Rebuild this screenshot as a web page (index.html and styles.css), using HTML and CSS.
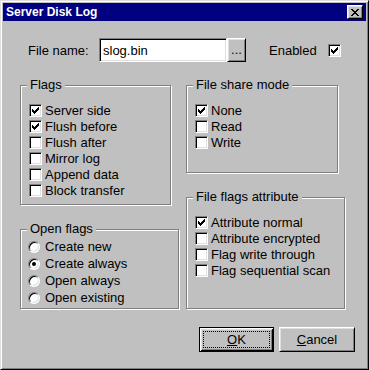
FILE: index.html
```html
<!DOCTYPE html>
<html lang="en">
<head>
  <meta charset="UTF-8" />
  <title>Server Disk Log</title>
  <link rel="stylesheet" href="styles.css">
</head>
<body>

  <div class="window">
    <div class="title-bar">
      <span class="title">Server Disk Log</span>
      <button type="button" class="close-btn">
        <svg width="8" height="7" viewBox="0 0 8 7" shape-rendering="crispEdges">
          <path d="M0 0h2v1H0z M6 0h2v1H6z M1 1h2v1H1z M5 1h2v1H5z M2 2h4v1H2z M3 3h2v1H3z M2 4h4v1H2z M1 5h2v1H1z M5 5h2v1H5z M0 6h2v1H0z M6 6h2v1H6z" fill="#000"/>
        </svg>
      </button>
    </div>

    <div class="file-row">
      <label for="fileName" class="file-label">File name:</label>
      <input type="text" id="fileName" class="text-input" value="slog.bin" />
      <button type="button" class="btn browse-btn">...</button>
      <span class="enabled-label">Enabled</span>
      <span class="check"><svg class="tick" width="7" height="7" viewBox="0 0 7 7" shape-rendering="crispEdges"><path d="M6 0h1v1H6z M5 1h2v1H5z M0 2h1v1H0z M4 2h3v1H4z M0 3h2v1H0z M3 3h3v1H3z M0 4h5v1H0z M1 5h3v1H1z M2 6h1v1H2z"/></svg></span>
    </div>

    <div class="groups">
      <div class="group-col">
        <fieldset class="group group-flags">
          <legend>Flags</legend>
          <div class="option"><span class="check"><svg class="tick" width="7" height="7" viewBox="0 0 7 7" shape-rendering="crispEdges"><path d="M6 0h1v1H6z M5 1h2v1H5z M0 2h1v1H0z M4 2h3v1H4z M0 3h2v1H0z M3 3h3v1H3z M0 4h5v1H0z M1 5h3v1H1z M2 6h1v1H2z"/></svg></span>Server side</div>
          <div class="option"><span class="check"><svg class="tick" width="7" height="7" viewBox="0 0 7 7" shape-rendering="crispEdges"><path d="M6 0h1v1H6z M5 1h2v1H5z M0 2h1v1H0z M4 2h3v1H4z M0 3h2v1H0z M3 3h3v1H3z M0 4h5v1H0z M1 5h3v1H1z M2 6h1v1H2z"/></svg></span>Flush before</div>
          <div class="option"><span class="check"></span>Flush after</div>
          <div class="option"><span class="check"></span>Mirror log</div>
          <div class="option"><span class="check"></span>Append data</div>
          <div class="option"><span class="check"></span>Block transfer</div>
        </fieldset>

        <fieldset class="group group-open">
          <legend>Open flags</legend>
          <div class="option radio-option"><span class="radio"></span>Create new</div>
          <div class="option radio-option"><span class="radio selected"></span>Create always</div>
          <div class="option radio-option"><span class="radio"></span>Open always</div>
          <div class="option radio-option"><span class="radio"></span>Open existing</div>
        </fieldset>
      </div>

      <div class="group-col">
        <fieldset class="group group-share">
          <legend>File share mode</legend>
          <div class="option"><span class="check"><svg class="tick" width="7" height="7" viewBox="0 0 7 7" shape-rendering="crispEdges"><path d="M6 0h1v1H6z M5 1h2v1H5z M0 2h1v1H0z M4 2h3v1H4z M0 3h2v1H0z M3 3h3v1H3z M0 4h5v1H0z M1 5h3v1H1z M2 6h1v1H2z"/></svg></span>None</div>
          <div class="option"><span class="check"></span>Read</div>
          <div class="option"><span class="check"></span>Write</div>
        </fieldset>

        <fieldset class="group group-attr">
          <legend>File flags attribute</legend>
          <div class="option"><span class="check"><svg class="tick" width="7" height="7" viewBox="0 0 7 7" shape-rendering="crispEdges"><path d="M6 0h1v1H6z M5 1h2v1H5z M0 2h1v1H0z M4 2h3v1H4z M0 3h2v1H0z M3 3h3v1H3z M0 4h5v1H0z M1 5h3v1H1z M2 6h1v1H2z"/></svg></span>Attribute normal</div>
          <div class="option"><span class="check"></span>Attribute encrypted</div>
          <div class="option"><span class="check"></span>Flag write through</div>
          <div class="option"><span class="check"></span>Flag sequential scan</div>
        </fieldset>
      </div>
    </div>

    <div class="actions">
      <button type="button" class="btn btn-default btn-ok"><span class="focus"><u>O</u>K</span></button>
      <button type="button" class="btn btn-cancel"><u>C</u>ancel</button>
    </div>
  </div>

</body>
</html>
```

FILE: styles.css
```css
body {
  margin: 0;
  font-family: "Liberation Sans", Arial, sans-serif;
  font-size: 13px;
  color: #000;
  background-color: #c0c0c0;
}

/* Window frame */
.window {
  width: 369px;
  height: 370px;
  box-sizing: border-box;
  border: 1px solid;
  border-color: #dfdfdf #000 #000 #dfdfdf;
  box-shadow: inset 1px 1px #fff, inset -1px -1px #808080;
  padding: 2px;
  background-color: #c0c0c0;
  display: flex;
  flex-direction: column;
}

.title-bar {
  height: 18px;
  background-color: #000080;
  color: #fff;
  display: flex;
  align-items: center;
  justify-content: space-between;
  padding: 0 3px;
}

.title {
  font-weight: bold;
  font-size: 12px;
}

.close-btn {
  width: 16px;
  height: 14px;
  padding: 0;
  box-sizing: border-box;
  background-color: #c0c0c0;
  border: 1px solid;
  border-color: #fff #000 #000 #fff;
  box-shadow: inset 1px 1px #dfdfdf, inset -1px -1px #808080;
  display: flex;
  align-items: center;
  justify-content: center;
}

/* File name row */
.file-row {
  display: flex;
  align-items: center;
  height: 24px;
  margin: 17px 0 0 25px;
}

.file-label {
  width: 71px;
}

.text-input {
  width: 128px;
  height: 24px;
  box-sizing: border-box;
  border: 1px solid;
  border-color: #808080 #fff #fff #808080;
  box-shadow: inset 1px 1px #000, inset -1px -1px #dfdfdf;
  padding: 0 3px;
  margin: 0;
  font: inherit;
  color: #000;
  background-color: #fff;
  outline: none;
}

.btn {
  box-sizing: border-box;
  padding: 0;
  margin: 0;
  font: inherit;
  color: #000;
  background-color: #c0c0c0;
  border: 1px solid;
  border-color: #fff #000 #000 #fff;
  box-shadow: inset 1px 1px #dfdfdf, inset -1px -1px #808080;
  display: flex;
  align-items: center;
  justify-content: center;
}

.browse-btn {
  width: 19px;
  height: 24px;
  line-height: 1;
  padding-bottom: 2px;
}

.enabled-label {
  margin: 0 11px 0 23px;
}

/* Checkboxes and radios */
.check {
  width: 13px;
  height: 13px;
  flex: none;
  box-sizing: border-box;
  border: 1px solid;
  border-color: #808080 #fff #fff #808080;
  box-shadow: inset 1px 1px #000, inset -1px -1px #dfdfdf;
  background-color: #fff;
  display: inline-flex;
  align-items: center;
  justify-content: center;
}

.tick {
  fill: #000;
}

.radio {
  width: 12px;
  height: 12px;
  flex: none;
  box-sizing: border-box;
  border-radius: 50%;
  border: 1px solid;
  border-color: #808080 #fff #fff #808080;
  box-shadow: inset 1px 1px #000, inset -1px -1px #dfdfdf;
  background-color: #fff;
  display: inline-flex;
  align-items: center;
  justify-content: center;
  margin-left: -1px;
  margin-right: 5px;
}

.radio.selected::after {
  content: "";
  width: 4px;
  height: 4px;
  border-radius: 50%;
  background-color: #000;
}

/* Group boxes */
.groups {
  display: flex;
  gap: 7px;
  margin: 15px 0 0 17px;
}

.group-col {
  display: flex;
  flex-direction: column;
  align-items: flex-start;
  gap: 16px;
}

.group {
  margin: 0;
  box-sizing: border-box;
  min-width: 0;
  border: 1px solid #808080;
  box-shadow: inset 1px 1px #fff, 1px 1px #fff;
  padding: 9px 8px 6px;
}

.group legend {
  line-height: 16px;
  padding: 0 3px;
  margin-left: -2px;
  background-color: #c0c0c0;
}

.group-flags {
  width: 151px;
}

.group-open {
  width: 159px;
  padding: 1px 8px 2px;
}

.group-share {
  width: 152px;
  padding-bottom: 22px;
}

.group-attr {
  width: 159px;
  padding-bottom: 30px;
}

.option {
  display: flex;
  align-items: center;
  height: 16px;
  white-space: nowrap;
}

.option .check {
  margin-right: 3px;
}

.radio-option {
  height: 17px;
}

/* Dialog buttons */
.actions {
  display: flex;
  justify-content: flex-end;
  gap: 5px;
  margin-top: 18px;
  padding-right: 11px;
}

.btn-ok {
  width: 75px;
  height: 25px;
  padding: 3px;
}

.btn-cancel {
  width: 76px;
  height: 25px;
}

.btn-default {
  border: 1px solid #000;
  box-shadow: inset 1px 1px #fff, inset -1px -1px #000, inset 2px 2px #dfdfdf, inset -2px -2px #808080;
}

.focus {
  width: 100%;
  height: 100%;
  box-sizing: border-box;
  border: 1px dotted #000;
  display: flex;
  align-items: center;
  justify-content: center;
}
```
